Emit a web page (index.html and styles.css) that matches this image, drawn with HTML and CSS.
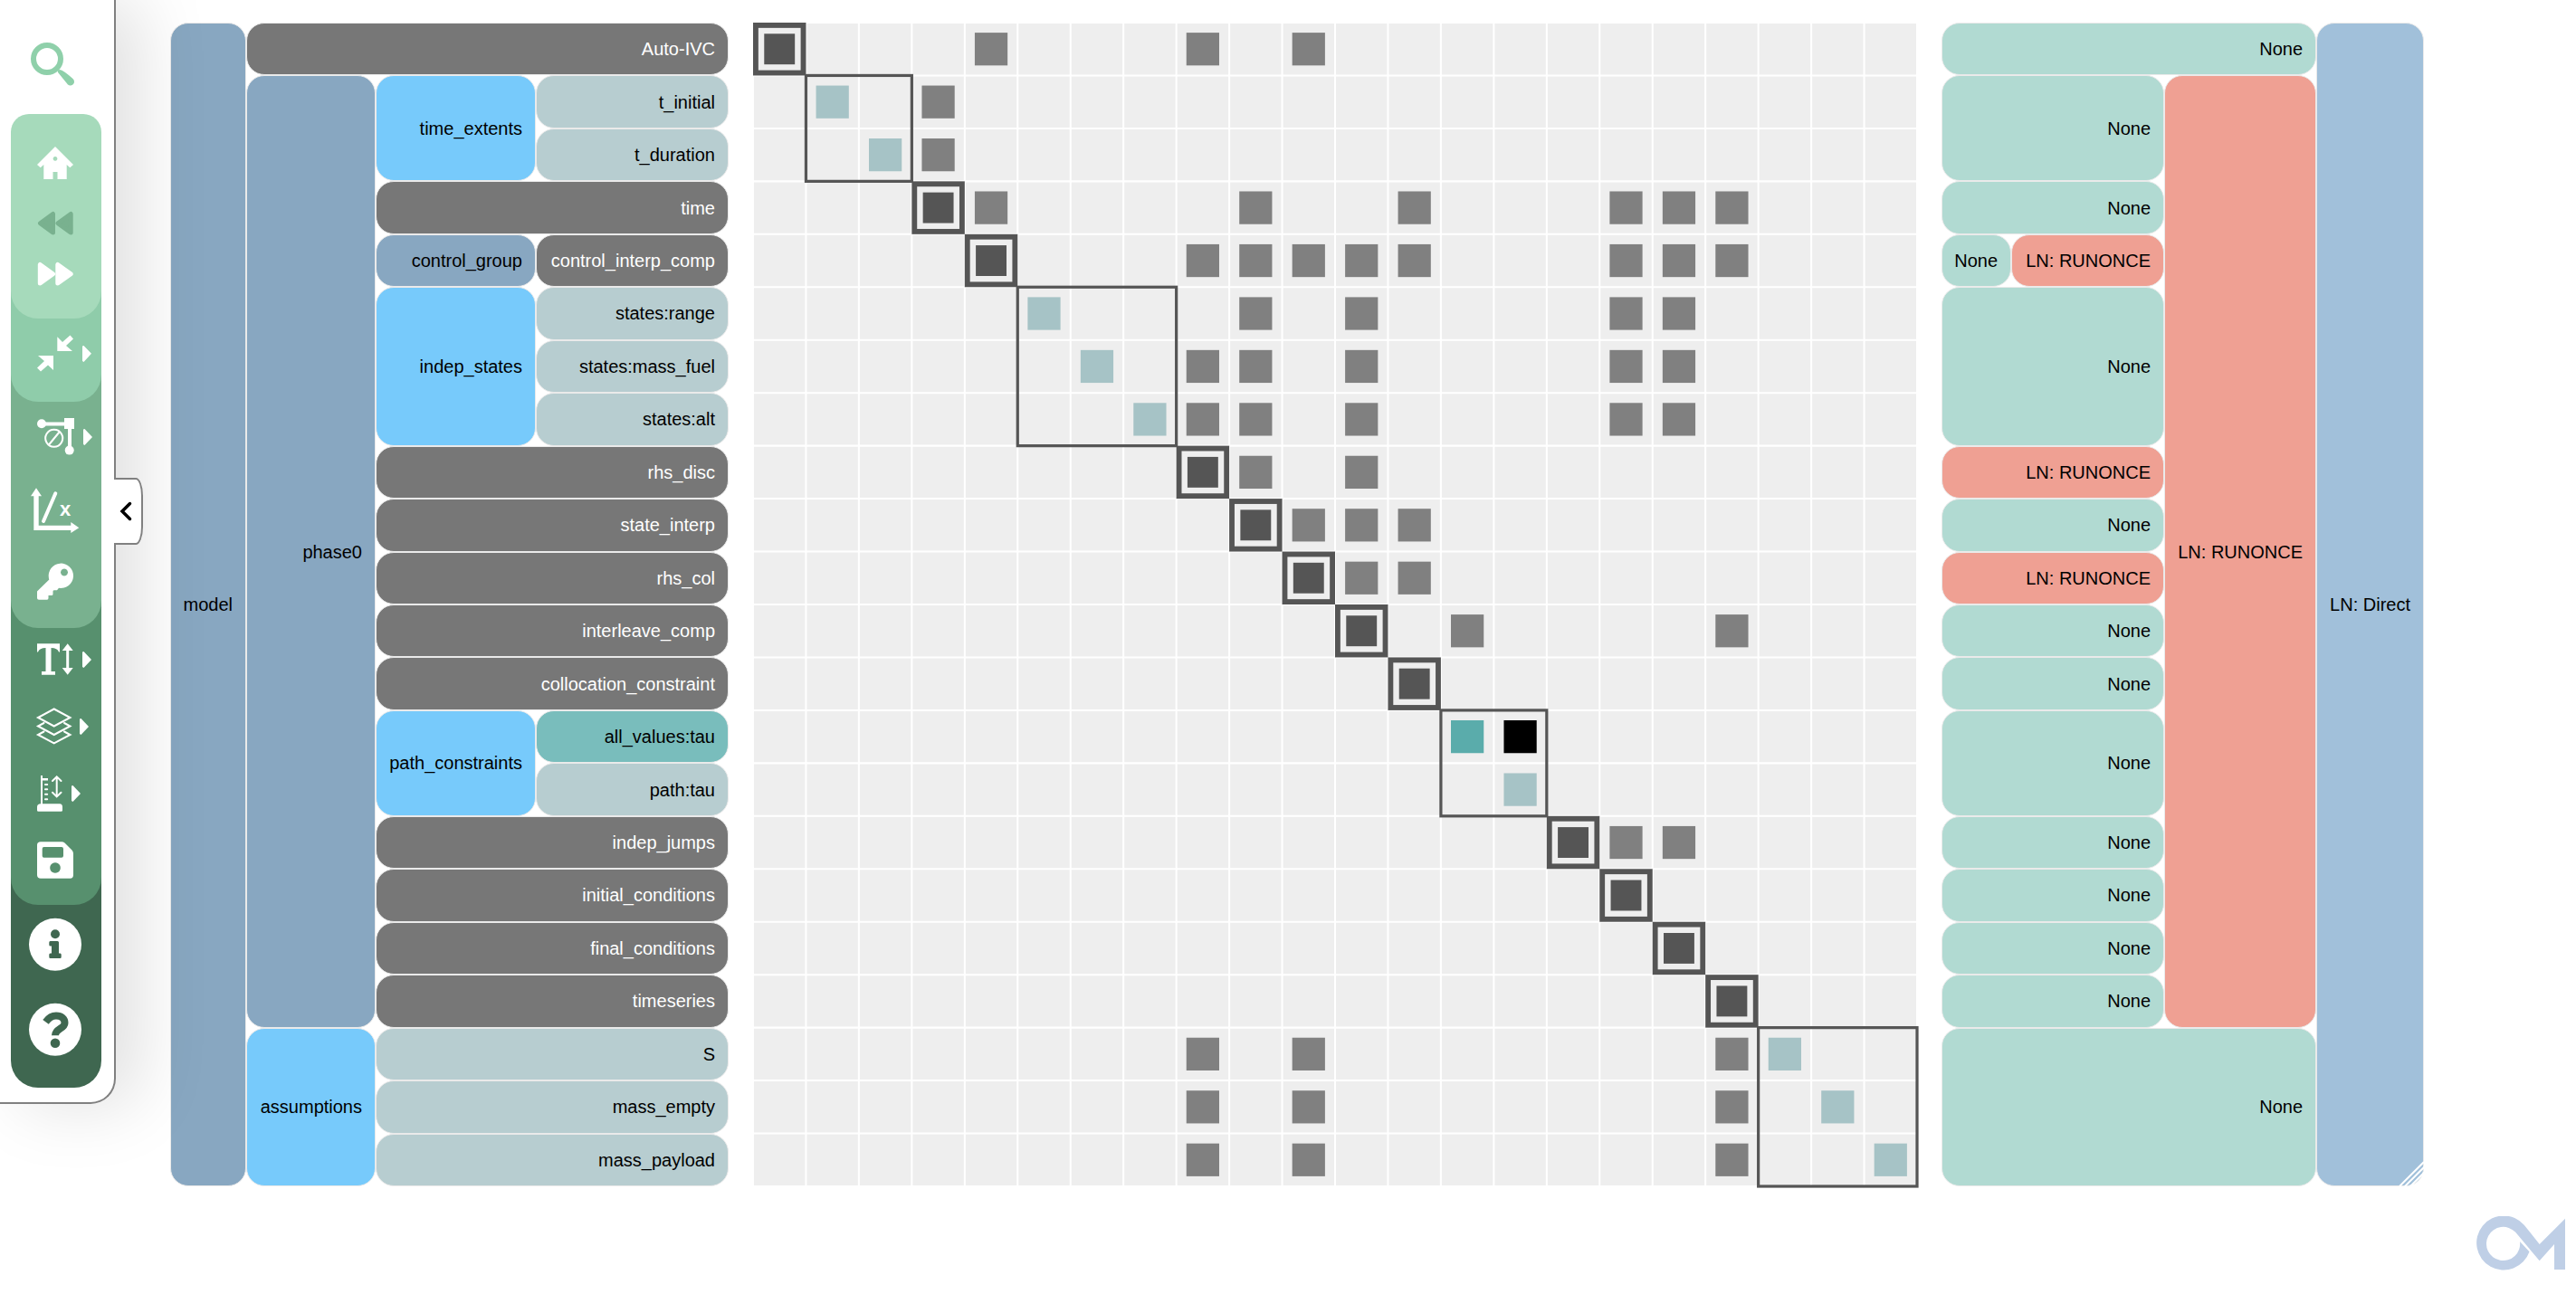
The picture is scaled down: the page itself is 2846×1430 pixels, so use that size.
FILE: index.html
```html
<!DOCTYPE html>
<html lang="en">
<head>
<meta charset="utf-8">
<title>Model diagram</title>
<link rel="stylesheet" href="styles.css">
</head>
<body>
<aside class="sidebar">
  <button class="tool tool-search" aria-label="Search"><svg viewBox="12 16 100 110"><circle cx="52" cy="65" r="15" fill="none" stroke="currentColor" stroke-width="6"/><path d="M64 80 Q63 77 66 77 Q70 77.500 80.500 87 A3.900 3.900 0 0 1 75 93.500 Z"/></svg></button>
  <nav class="tools" aria-label="Toolbar">
    <div class="group group-1">
      <button class="tool h76" aria-label="Home"><svg viewBox="12 142 100 76"><path fill-rule="evenodd" d="M61 162 81 182 77.300 185.300 73.700 182V198H63.500V190H58.500V198H48.300V182L44.700 185.300 41 182ZM61 173a2.400 2.400 0 1 0 .01 0Z"/></svg></button>
      <button class="tool h56 dim" aria-label="Back"><svg viewBox="12 218 100 56"><path class="round" d="M44.500 246.700 58.500 236.500V257ZM64 246.700 78.200 236.500V257Z"/></svg></button>
      <button class="tool h56" aria-label="Forward"><svg viewBox="12 274 100 56"><path class="round" d="M44.300 292.500V313L58.500 302.700ZM63.800 292.500V313L78.200 302.700Z"/></svg></button>
    </div>
    <div class="group group-2">
      <button class="tool h76" aria-label="Collapse"><svg viewBox="12 352 100 76"><path d="M63.300 372.300 69 378 77.500 370.500 81 374.500 73 382 80 388H63.300ZM42 393H59V409L53 403.500 45 410.500 41 406.500 49 399ZM91 382.500 92.500 382 101 390.700 92.500 400 91 399Z"/></svg></button>
    </div>
    <div class="group group-3">
      <button class="tool h76" aria-label="Connections"><svg viewBox="12 444 100 76"><circle cx="46" cy="468.300" r="5"/><path d="M71 462H82V474H79V494H75V474H71V470.500H46V466.500H71Z"/><circle cx="76.700" cy="497.600" r="5"/><path class="line" stroke-width="2" d="M54 491.500 65.500 477.500M59.700 474.800a9.500 9.500 0 1 0 .01 0Z"/><path d="M92 474.500 93.500 474 102 483 93.500 492 92 491Z"/></svg></button>
      <button class="tool h88" aria-label="Linear view"><svg viewBox="12 520 100 88"><path d="M40 539.300 46 548.300H42.700V580.700H78.300V577L87.300 583.300 78.300 589V586H37.300V548.300H34Z"/><path class="line" stroke-width="4" d="M61.300 545.300 48 576"/><text class="axis" x="72" y="570">x</text></svg></button>
      <button class="tool h70" aria-label="Legend"><svg viewBox="12 608 100 70"><path fill-rule="evenodd" d="M53.900 639A13.700 13.700 0 1 1 65 649.800L63 652.300H60Q58.500 652.300 58.500 653.500V656.500Q58.500 658 57 658H53.500V661Q53.500 662.700 52 662.700H43Q41 662.700 41 661V653.500L54.300 640.500ZM71 628.400a4 4 0 1 0 .01 0Z"/></svg></button>
    </div>
    <div class="group group-4">
      <button class="tool h70" aria-label="Text size"><svg viewBox="12 694 100 70"><path d="M41 711.300H66V720.500H65Q63.500 716 56.500 716V742H61V745.700H46V742H50.500V716Q43.500 716 42 720.500H41ZM74.700 711.300 80.700 718.900H76.200V738.100H80.700L74.700 745.700 68.700 738.100H73.200V718.900H68.700ZM91 720.500 92.500 720 101 729 92.500 738 91 737Z"/></svg></button>
      <button class="tool h76" aria-label="Layers"><svg viewBox="12 764 100 76"><path class="line" stroke-width="2" d="M59.700 783.500 77.500 793 59.700 802.500 42 793ZM48.500 799 42 802.500 59.700 812 77.500 802.500 71 799M48.500 808.500 42 812 59.700 821.300 77.500 812 71 808.500"/><path d="M88 794.500 89.500 794 98 803 89.500 812 88 811Z"/></svg></button>
      <button class="tool h74" aria-label="Depth"><svg viewBox="12 840 100 74"><path d="M45 857H47V860H53V862.500H47V888.300H66Q69 888.300 69 892V895.500Q69 896.700 67.500 896.700H42.500Q41 896.700 41 895.500V892Q41 888.300 45 888.300Z"/><path class="line" stroke-width="2" d="M50 867H52.200M50 872.300H52.200M50 877.700H52.200M50 883.300H52.200M62.700 858.500V880M58 863 62.700 858.300 67.500 863M58 875.700 62.700 880.400 67.500 875.700"/><path d="M79 868.500 80.500 868 89 877 80.500 886 79 885Z"/></svg></button>
      <button class="tool h74" aria-label="Save"><svg viewBox="12 914 100 74"><path fill-rule="evenodd" d="M45 930.300H68Q70 930.300 71.500 931.500L79.500 939.500Q81 941 81 943.500V967Q81 970.700 77.500 970.700H45Q41 970.700 41 967V934Q41 930.300 45 930.300ZM48.500 936Q46.700 936 46.700 938V945.700Q46.700 947.700 48.500 947.700H68Q70 947.700 70 945.700V938Q70 936 68 936ZM61 953.200a5.800 5.800 0 1 0 .01 0Z"/></svg></button>
    </div>
    <div class="group group-5">
      <button class="tool h88" aria-label="Information"><svg viewBox="12 1000 100 88"><circle cx="61" cy="1043.700" r="29"/><circle class="ink" cx="61" cy="1032.300" r="5"/><path class="ink" d="M55.500 1040H63.500Q65 1040 65 1041.500V1053.500H66.500Q67.700 1053.500 67.700 1055V1057.500Q67.700 1059 66.500 1059H55.500Q54.300 1059 54.300 1057.500V1055Q54.300 1053.500 55.500 1053.500H57V1045.500H55.500Q54.300 1045.500 54.300 1044V1041.500Q54.300 1040 55.500 1040Z"/></svg></button>
      <button class="tool h100" aria-label="Help"><svg viewBox="12 1088 100 100"><circle cx="61" cy="1137.700" r="29"/><path class="ink-line" d="M50.500 1129.300Q55.500 1122.500 62 1122.500C68 1122.500 71.500 1126 71.500 1130.500C71.500 1137 61 1136.500 61 1144.300"/><circle class="ink" cx="61" cy="1152.700" r="5.300"/></svg></button>
    </div>
  </nav>
  <button class="hide-bar" aria-label="Hide toolbar"><svg viewBox="0 0 14 24"><path d="M11.500 3.500 3 12 11.500 20.500" fill="none" stroke="#000" stroke-width="3.500" stroke-linecap="round"/></svg></button>
</aside>
<div class="page">
  <main class="diagram">
    <section class="tree" aria-label="Model hierarchy">
      <div class="cell system r22">model</div>
      <div class="cell comp c3">Auto-IVC</div>
      <div class="cell system r18">phase0</div>
      <div class="cell ivc r2">time_extents</div>
      <div class="cell var">t_initial</div>
      <div class="cell var">t_duration</div>
      <div class="cell comp c2">time</div>
      <div class="cell system">control_group</div>
      <div class="cell comp">control_interp_comp</div>
      <div class="cell ivc r3">indep_states</div>
      <div class="cell var">states:range</div>
      <div class="cell var">states:mass_fuel</div>
      <div class="cell var">states:alt</div>
      <div class="cell comp c2">rhs_disc</div>
      <div class="cell comp c2">state_interp</div>
      <div class="cell comp c2">rhs_col</div>
      <div class="cell comp c2">interleave_comp</div>
      <div class="cell comp c2">collocation_constraint</div>
      <div class="cell ivc r2">path_constraints</div>
      <div class="cell auto">all_values:tau</div>
      <div class="cell var">path:tau</div>
      <div class="cell comp c2">indep_jumps</div>
      <div class="cell comp c2">initial_conditions</div>
      <div class="cell comp c2">final_conditions</div>
      <div class="cell comp c2">timeseries</div>
      <div class="cell ivc r3">assumptions</div>
      <div class="cell var c2">S</div>
      <div class="cell var c2">mass_empty</div>
      <div class="cell var c2">mass_payload</div>
    </section>
    <svg class="matrix" viewBox="0 0 22 22" role="img" aria-label="Connection matrix">
      <defs>
        <rect id="n" x=".19" y=".19" width=".62" height=".62"/>
        <g id="k"><rect x=".05" y=".05" width=".9" height=".9" fill="none" stroke="#555" stroke-width=".1"/><rect x=".21" y=".21" width=".58" height=".58" fill="#555"/></g>
      </defs>
      <rect width="22" height="22" fill="#eee"/>
      <path class="rules" d="M0 0H22M0 1H22M0 2H22M0 3H22M0 4H22M0 5H22M0 6H22M0 7H22M0 8H22M0 9H22M0 10H22M0 11H22M0 12H22M0 13H22M0 14H22M0 15H22M0 16H22M0 17H22M0 18H22M0 19H22M0 20H22M0 21H22M0 22H22M0 0V22M1 0V22M2 0V22M3 0V22M4 0V22M5 0V22M6 0V22M7 0V22M8 0V22M9 0V22M10 0V22M11 0V22M12 0V22M13 0V22M14 0V22M15 0V22M16 0V22M17 0V22M18 0V22M19 0V22M20 0V22M21 0V22M22 0V22"/>
      <g fill="#808080">
        <use href="#n" x="4" y="0"/><use href="#n" x="8" y="0"/><use href="#n" x="10" y="0"/>
        <use href="#n" x="3" y="1"/><use href="#n" x="3" y="2"/>
        <use href="#n" x="4" y="3"/><use href="#n" x="9" y="3"/><use href="#n" x="12" y="3"/><use href="#n" x="16" y="3"/><use href="#n" x="17" y="3"/><use href="#n" x="18" y="3"/>
        <use href="#n" x="8" y="4"/><use href="#n" x="9" y="4"/><use href="#n" x="10" y="4"/><use href="#n" x="11" y="4"/><use href="#n" x="12" y="4"/><use href="#n" x="16" y="4"/><use href="#n" x="17" y="4"/><use href="#n" x="18" y="4"/>
        <use href="#n" x="9" y="5"/><use href="#n" x="11" y="5"/><use href="#n" x="16" y="5"/><use href="#n" x="17" y="5"/>
        <use href="#n" x="8" y="6"/><use href="#n" x="9" y="6"/><use href="#n" x="11" y="6"/><use href="#n" x="16" y="6"/><use href="#n" x="17" y="6"/>
        <use href="#n" x="8" y="7"/><use href="#n" x="9" y="7"/><use href="#n" x="11" y="7"/><use href="#n" x="16" y="7"/><use href="#n" x="17" y="7"/>
        <use href="#n" x="9" y="8"/><use href="#n" x="11" y="8"/>
        <use href="#n" x="10" y="9"/><use href="#n" x="11" y="9"/><use href="#n" x="12" y="9"/>
        <use href="#n" x="11" y="10"/><use href="#n" x="12" y="10"/>
        <use href="#n" x="13" y="11"/><use href="#n" x="18" y="11"/>
        <use href="#n" x="16" y="15"/><use href="#n" x="17" y="15"/>
        <use href="#n" x="8" y="19"/><use href="#n" x="10" y="19"/><use href="#n" x="18" y="19"/>
        <use href="#n" x="8" y="20"/><use href="#n" x="10" y="20"/><use href="#n" x="18" y="20"/>
        <use href="#n" x="8" y="21"/><use href="#n" x="10" y="21"/><use href="#n" x="18" y="21"/>
      </g>
      <g fill="#a6c3c6">
        <use href="#n" x="1" y="1"/><use href="#n" x="2" y="2"/><use href="#n" x="5" y="5"/><use href="#n" x="6" y="6"/><use href="#n" x="7" y="7"/><use href="#n" x="14" y="14"/><use href="#n" x="19" y="19"/><use href="#n" x="20" y="20"/><use href="#n" x="21" y="21"/>
      </g>
      <use href="#n" x="13" y="13" fill="#5aacab"/>
      <use href="#n" x="14" y="13" fill="#000"/>
      <use href="#k" x="0" y="0"/><use href="#k" x="3" y="3"/><use href="#k" x="4" y="4"/><use href="#k" x="8" y="8"/><use href="#k" x="9" y="9"/><use href="#k" x="10" y="10"/><use href="#k" x="11" y="11"/><use href="#k" x="12" y="12"/><use href="#k" x="15" y="15"/><use href="#k" x="16" y="16"/><use href="#k" x="17" y="17"/><use href="#k" x="18" y="18"/>
      <g class="frames">
        <rect x="1" y="1" width="2" height="2"/><rect x="5" y="5" width="3" height="3"/><rect x="13" y="13" width="2" height="2"/><rect x="19" y="19" width="3" height="3"/>
      </g>
    </svg>
    <section class="solvers" aria-label="Solvers">
      <div class="cell none c3">None</div>
      <div class="cell direct r22">LN: Direct</div>
      <div class="cell none c2 r2">None</div>
      <div class="cell once r18">LN: RUNONCE</div>
      <div class="cell none c2">None</div>
      <div class="cell none">None</div>
      <div class="cell once">LN: RUNONCE</div>
      <div class="cell none c2 r3">None</div>
      <div class="cell once c2">LN: RUNONCE</div>
      <div class="cell none c2">None</div>
      <div class="cell once c2">LN: RUNONCE</div>
      <div class="cell none c2">None</div>
      <div class="cell none c2">None</div>
      <div class="cell none c2 r2">None</div>
      <div class="cell none c2">None</div>
      <div class="cell none c2">None</div>
      <div class="cell none c2">None</div>
      <div class="cell none c2">None</div>
      <div class="cell none c3 r3">None</div>
      <svg class="grip" viewBox="0 0 28 28"><path d="M1 28 28 1M5 30 30 5M9 32 32 9" stroke="#fff" stroke-width="2"/></svg>
    </section>
  </main>
  <footer class="brand"><svg viewBox="2736 1343 98 61" role="img" aria-label="OpenMDAO"><path fill="#bfcfe6" d="M2805.700 1374 2788.700 1352.700A30 30 0 1 0 2794.500 1382.300L2784 1371A18.600 18.600 0 1 1 2779 1360.600L2805.700 1392.300 2822 1374V1402H2834V1345.700Z"/></svg></footer>
</div>
</body>
</html>
```
FILE: styles.css
```css
* { box-sizing: border-box; }
body {
  margin: 0;
  display: flex;
  align-items: flex-start;
  background: #fff;
  color: #000;
  font: 20px/24px "Liberation Sans", Arial, Helvetica, sans-serif;
}
button { font: inherit; border: 0; padding: 0; background: none; cursor: pointer; }
svg { display: block; }

/* Toolbar */
.sidebar {
  position: relative;
  z-index: 2;
  flex: none;
  width: 128px;
  padding: 16px 14px 16px 12px;
  background: #fff;
  border: solid #808080;
  border-width: 0 2px 2px 0;
  border-radius: 0 0 28px 0;
  box-shadow: 25px 0 80px rgba(0, 0, 0, .13);
}
.tool { display: block; width: 100%; color: #fff; }
.tool svg { width: 100%; height: 100%; fill: currentColor; }
.tool-search { height: 110px; color: #8fd0aa; }
.h56 { height: 56px; }
.h70 { height: 70px; }
.h74 { height: 74px; }
.h76 { height: 76px; }
.h88 { height: 88px; }
.h100 { height: 100px; }
.dim { color: #79b18f; }
.tool .round { stroke: currentColor; stroke-width: 5; stroke-linejoin: round; }
.tool .line { fill: none; stroke: currentColor; stroke-linecap: round; }
.tool .ink { fill: #3f6750; }
.tool .ink-line { fill: none; stroke: #3f6750; stroke-width: 8; }
.axis { font-size: 22px; font-weight: 700; text-anchor: middle; }

.group {
  position: relative;
  margin-top: -30px;
  padding-top: 30px;
  border-radius: 0 0 30px 30px;
}
.group-1 { z-index: 5; margin-top: 0; padding: 16px 0 22px; border-radius: 20px 20px 30px 30px; background: #a6dabb; }
.group-2 { z-index: 4; padding-bottom: 16px; background: #8fccaa; }
.group-3 { z-index: 3; padding-bottom: 16px; background: #79b18f; }
.group-4 { z-index: 2; padding-bottom: 12px; background: #57906e; }
.group-5 { z-index: 1; padding-bottom: 14px; background: #3f6750; }

.hide-bar {
  position: absolute;
  left: 100%;
  top: 528px;
  width: 32px;
  height: 74px;
  padding-left: 6px;
  background: #fff;
  border: 2px solid #808080;
  border-left: 0;
  border-radius: 0 8px 8px 0 / 0 20px 20px 0;
}
.hide-bar svg { width: 14px; height: 24px; }

/* Diagram */
.page { flex: 1; padding: 25px 12px 24px 60px; }
.diagram { display: flex; gap: 27px; height: calc(90vh - 1px); }
.tree, .solvers {
  position: relative;
  flex: none;
  display: grid;
  grid-template-rows: repeat(22, minmax(0, 1fr));
}
.tree { grid-template-columns: 84px 143px 177px 213px; }
.solvers { grid-template-columns: 77px 169px 168px 119px; }
.matrix { flex: none; height: 100%; aspect-ratio: 1; overflow: visible; }
.rules { fill: none; stroke: #fff; stroke-width: .035; }
.frames { fill: none; stroke: #555; stroke-width: .055; }

.cell {
  display: flex;
  align-items: center;
  justify-content: flex-end;
  padding: 0 14px;
  border: 1px solid #eaeaea;
  border-radius: 20px;
  white-space: nowrap;
}
.c2 { grid-column-end: span 2; }
.c3 { grid-column-end: span 3; }
.r2 { grid-row-end: span 2; }
.r3 { grid-row-end: span 3; }
.r18 { grid-row-end: span 18; }
.r22 { grid-row-end: span 22; }
.system { background: #88a7c1; }
.comp { background: #777; color: #fff; }
.ivc { background: #77cafb; }
.var { background: #b7cdd0; }
.auto { background: #79bdbc; }
.none { background: #b1dad2; }
.once { background: #efa093; }
.direct { background: #a1c0da; }
.grip { position: absolute; right: 0; bottom: 0; width: 28px; height: 28px; }

.brand { display: flex; justify-content: flex-end; padding-top: 33px; }
.brand svg { width: 98px; height: 61px; }
```
